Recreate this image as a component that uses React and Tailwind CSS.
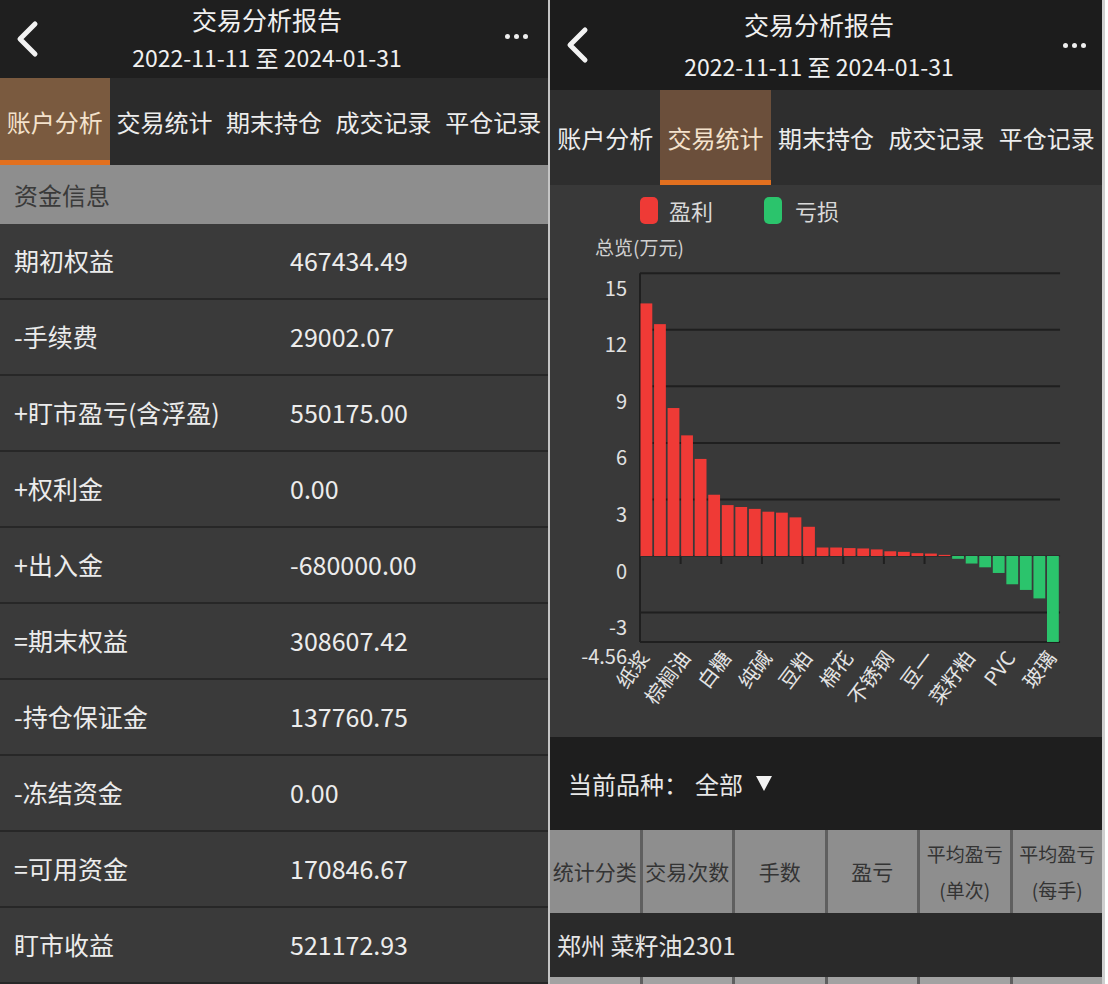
import React from 'react';

const tabs = ['账户分析', '交易统计', '期末持仓', '成交记录', '平仓记录'];

const rows = [
  ['期初权益', '467434.49'],
  ['-手续费', '29002.07'],
  ['+盯市盈亏(含浮盈)', '550175.00'],
  ['+权利金', '0.00'],
  ['+出入金', '-680000.00'],
  ['=期末权益', '308607.42'],
  ['-持仓保证金', '137760.75'],
  ['-冻结资金', '0.00'],
  ['=可用资金', '170846.67'],
  ['盯市收益', '521172.93'],
];

// 万元, sorted high to low
const bars = [
  13.4, 12.3, 7.85, 6.4, 5.15, 3.25, 2.7, 2.6, 2.5, 2.35, 2.3, 2.05, 1.55, 0.45, 0.45, 0.42,
  0.4, 0.35, 0.25, 0.22, 0.15, 0.13, 0.06, -0.15, -0.4, -0.6, -0.9, -1.5, -1.8, -2.25, -4.56,
];

const names = ['纸浆', '棕榈油', '白糖', '纯碱', '豆粕', '棉花', '不锈钢', '豆一', '菜籽粕', 'PVC', '玻璃'];

const Back = () => (
  <svg width="28" height="40" viewBox="0 0 28 40">
    <polyline points="21,5 6,20 21,35" fill="none" stroke="#f2f2f2" strokeWidth="5" strokeLinecap="round" strokeLinejoin="round" />
  </svg>
);

const Dots = () => (
  <div className="flex gap-[4px]">
    <span className="w-[5px] h-[5px] rounded-full bg-[#eeeeee]" />
    <span className="w-[5px] h-[5px] rounded-full bg-[#eeeeee]" />
    <span className="w-[5px] h-[5px] rounded-full bg-[#eeeeee]" />
  </div>
);

const Tabs = ({ active, activeBg }) => (
  <div className="flex h-full">
    {tabs.map((t, i) => (
      <div
        key={t}
        className={
          'relative flex-1 flex items-center justify-center text-[24px] ' +
          (i === active ? activeBg + ' text-[#f4e2cc]' : 'text-[#ededed]')
        }
      >
        {t}
        {i === active && <div className="absolute left-0 right-0 bottom-0 h-[5px] bg-[#e2701f]" />}
      </div>
    ))}
  </div>
);

const Chart = () => {
  const x0 = 90;
  const pitch = 13.55;
  const zero = 297;
  const unit = 18.85;
  const y = (v) => zero - v * unit;
  const grid = [15, 12, 9, 6, 3, -3];
  const labels = [
    [15, '15'],
    [12, '12'],
    [9, '9'],
    [6, '6'],
    [3, '3'],
    [0, '0'],
    [-3, '-3'],
    [-4.56, '-4.56'],
  ];
  const right = x0 + bars.length * pitch;
  return (
    <svg width="554" height="478" viewBox="0 0 554 478">
      {grid.map((g) => (
        <line key={g} x1={x0} x2={right} y1={y(g)} y2={y(g)} stroke="#1f1f1f" strokeWidth="2" />
      ))}
      <line x1={x0} x2={x0} y1={y(15)} y2={y(-4.56)} stroke="#1f1f1f" strokeWidth="2" />
      <line x1={x0} x2={right} y1={y(-4.56)} y2={y(-4.56)} stroke="#1f1f1f" strokeWidth="2" />
      {[1, 2, 3, 4, 5, 6, 7].map((k) => (
        <line key={k} x1={x0 + k * 3 * pitch} x2={x0 + k * 3 * pitch} y1={zero} y2={zero + 8} stroke="#1f1f1f" strokeWidth="2" />
      ))}
      <line x1={x0} x2={right} y1={zero} y2={zero} stroke="#2a2a2a" strokeWidth="1.5" />
      {bars.map((v, i) => (
        <rect
          key={i}
          x={x0 + i * pitch + 0.5}
          width="11.8"
          y={v > 0 ? y(v) : zero}
          height={Math.max(Math.abs(v) * unit, 1)}
          fill={v > 0 ? '#ef3a36' : '#2bc46c'}
        />
      ))}
      {labels.map(([v, t]) => (
        <text key={t} x="77" y={y(v) + 14} textAnchor="end" dominantBaseline="central" fontSize="20" fill="#e2e2e2">
          {t}
        </text>
      ))}
      {names.map((n, k) => {
        const cx = x0 + k * 3 * pitch + 4;
        return (
          <text
            key={n}
            x={cx}
            y="394"
            textAnchor="end"
            dominantBaseline="central"
            fontSize="20"
            fill="#e4e4e4"
            transform={`rotate(-53 ${cx} 394)`}
          >
            {n}
          </text>
        );
      })}
    </svg>
  );
};

const headCols = [
  ['统计分类'],
  ['交易次数'],
  ['手数'],
  ['盈亏'],
  ['平均盈亏', '(单次)'],
  ['平均盈亏', '(每手)'],
];

export default function App() {
  return (
    <div className="w-[1108px] h-[984px] overflow-hidden flex bg-white font-['Noto_Sans_CJK_SC','Noto_Sans',sans-serif]">
      {/* left phone: 账户分析 */}
      <div className="w-[548px] flex flex-col bg-[#3a3a3a]">
        <div className="h-[78px] bg-[#1f1f1f] grid grid-cols-[50px_1fr_64px] items-center">
          <div className="pl-[14px]">
            <Back />
          </div>
          <div className="flex flex-col items-center text-[#f0f0f0] leading-[32px] pb-[2px]">
            <span className="text-[25px]">交易分析报告</span>
            <span className="mt-[6px] text-[23px]">2022-11-11 至 2024-01-31</span>
          </div>
          <div className="flex justify-end pr-[20px] -mt-[6px]">
            <Dots />
          </div>
        </div>
        <div className="h-[87px] bg-[#2b2b2b]">
          <Tabs active={0} activeBg="bg-[#7a5a3f]" />
        </div>
        <div className="h-[59px] bg-[#8e8e8e] flex items-center pl-[14px] text-[24px] text-[#3a3a3a]">资金信息</div>
        {rows.map(([k, v]) => (
          <div key={k} className="h-[76px] flex items-center border-b-2 border-[#272727] text-[25px] text-[#ececec]">
            <span className="w-[290px] pl-[14px]">{k}</span>
            <span>{v}</span>
          </div>
        ))}
      </div>

      <div className="w-[2px] bg-[#c4c4c4]" />

      {/* right phone: 交易统计 */}
      <div className="w-[555px] flex flex-col bg-[#393939] border-r-[3px] border-[#cfcfcf]">
        <div className="h-[90px] bg-[#1c1c1c] grid grid-cols-[50px_1fr_64px] items-center">
          <div className="pl-[14px]">
            <Back />
          </div>
          <div className="flex flex-col items-center text-[#f0f0f0] leading-[32px]">
            <span className="text-[25px]">交易分析报告</span>
            <span className="mt-[10px] text-[23px]">2022-11-11 至 2024-01-31</span>
          </div>
          <div className="flex justify-end pr-[16px]">
            <Dots />
          </div>
        </div>
        <div className="h-[95px] bg-[#2e2e2e]">
          <Tabs active={1} activeBg="bg-[#6b4f3b]" />
        </div>

        <div className="h-[552px] flex flex-col bg-[#393939]">
          <div className="h-[50px] flex items-center pl-[90px] text-[22px] text-[#d9d9d9]">
            <span className="w-[18px] h-[27px] rounded-[5px] bg-[#ef3a36]" />
            <span className="ml-[11px]">盈利</span>
            <span className="ml-[51px] w-[18px] h-[27px] rounded-[5px] bg-[#2bc46c]" />
            <span className="ml-[13px]">亏损</span>
          </div>
          <div className="h-[24px] leading-[24px] pl-[45px] text-[19px] text-[#d0d0d0]">总览(万元)</div>
          <Chart />
        </div>

        <div className="h-[93px] bg-[#1e1e1e] flex items-center pl-[18px] text-[24px] text-[#e8e8e8]">
          <span>当前品种：</span>
          <span className="ml-[7px]">全部</span>
          <svg className="ml-[12px]" width="18" height="17" viewBox="0 0 18 17">
            <polygon points="1,1 17,1 9,16" fill="#f2f2f2" />
          </svg>
        </div>

        <div className="h-[83px] grid grid-cols-6 gap-x-[3px] bg-[#5f5f5f]">
          {headCols.map((c, i) => (
            <div key={i} className="bg-[#8e8e8e] flex flex-col items-center justify-center text-[#343434]">
              {c.length === 1 ? (
                <span className="text-[21px]">{c[0]}</span>
              ) : (
                <>
                  <span className="text-[19px] leading-[36px]">{c[0]}</span>
                  <span className="text-[19px] leading-[36px]">{c[1]}</span>
                </>
              )}
            </div>
          ))}
        </div>

        <div className="h-[64px] bg-[#2a2a2a] flex items-center pl-[7px] text-[24px] text-[#e6e6e6]">郑州 菜籽油2301</div>

        <div className="flex-1 grid grid-cols-6 gap-x-[3px] bg-[#5f5f5f]">
          {[0, 1, 2, 3, 4, 5].map((i) => (
            <div key={i} className="bg-[#a2a2a2]" />
          ))}
        </div>
      </div>
    </div>
  );
}
